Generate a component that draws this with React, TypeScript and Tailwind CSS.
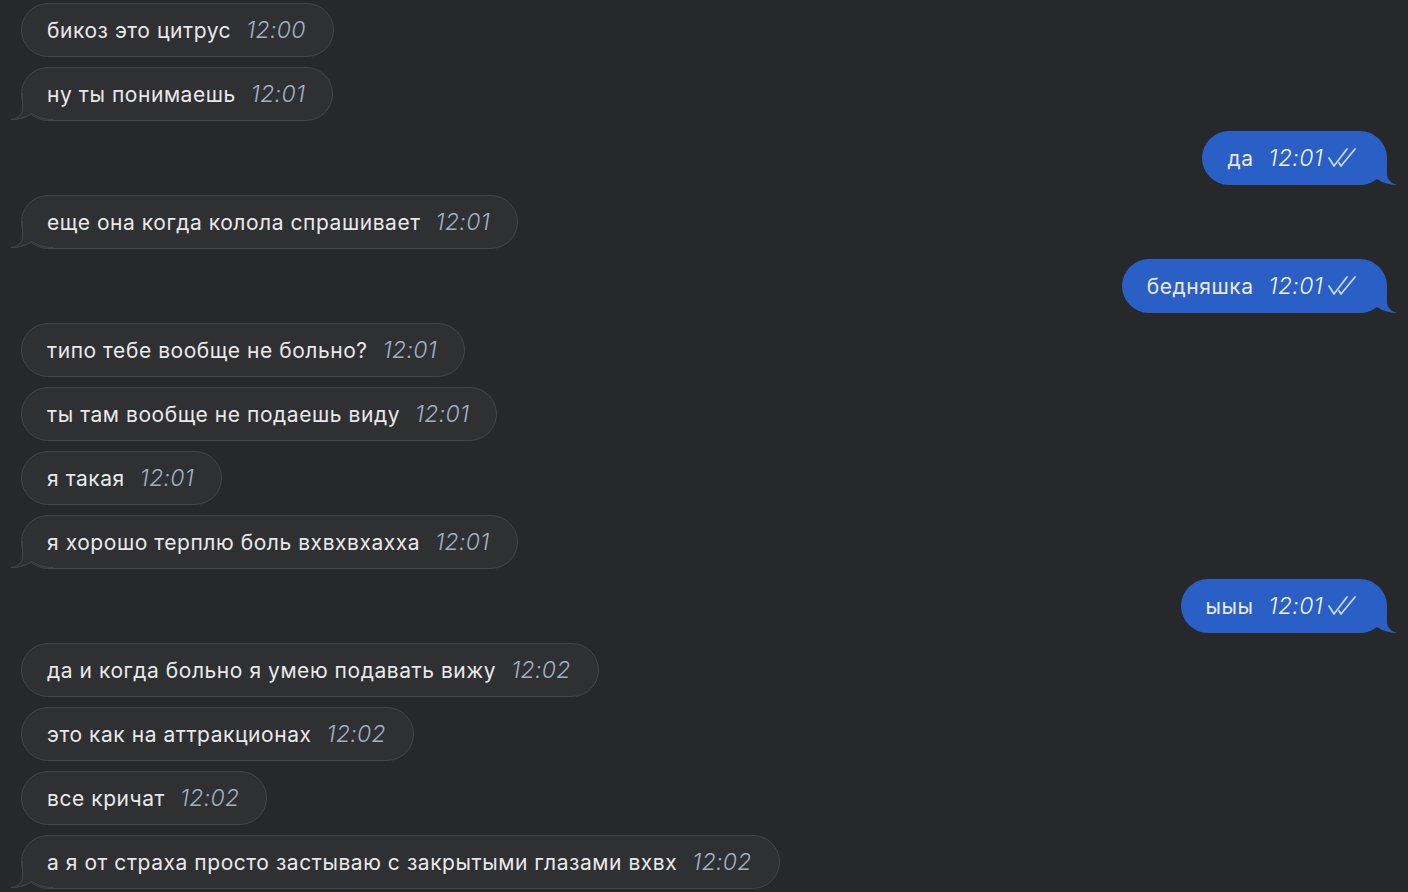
import React from 'react';

type Message = {
  text: string,
  time: string,
  out?: boolean,
  tail?: boolean,
};

const MESSAGES: Message[] = [
  { text: 'бикоз это цитрус', time: '12:00' },
  { text: 'ну ты понимаешь', time: '12:01', tail: true },
  { text: 'да', time: '12:01', out: true, tail: true },
  { text: 'еще она когда колола спрашивает', time: '12:01', tail: true },
  { text: 'бедняшка', time: '12:01', out: true, tail: true },
  { text: 'типо тебе вообще не больно?', time: '12:01' },
  { text: 'ты там вообще не подаешь виду', time: '12:01' },
  { text: 'я такая', time: '12:01' },
  { text: 'я хорошо терплю боль вхвхвхахха', time: '12:01', tail: true },
  { text: 'ыыы', time: '12:01', out: true, tail: true },
  { text: 'да и когда больно я умею подавать вижу', time: '12:02' },
  { text: 'это как на аттракционах', time: '12:02' },
  { text: 'все кричат', time: '12:02' },
  { text: 'а я от страха просто застываю с закрытыми глазами вхвх', time: '12:02', tail: true },
];

const TAIL_PATH = 'M11,0 L11,16 C11,22 6,26 0,27 C8,27 15,25 21,21 C27,25 33,27 42,27 L42,0 Z';
const TAIL_EDGE = 'M11.5,0 L11.5,16 C11.5,22 6,26 0,26.5 C8,26.5 15,24.5 21,20.5 C27,24.5 33,26.5 42,26.5';

function Tail({ out }: { out?: boolean }) {
  if (out) {
    return (
      <svg
        className="absolute bottom-0 right-[-11px] -scale-x-100"
        width="42"
        height="27"
        viewBox="0 0 42 27"
      >
        <path d={TAIL_PATH} fill="#2a5fc6" />
      </svg>
    );
  }
  return (
    <svg className="absolute bottom-0 left-[-11px]" width="42" height="27" viewBox="0 0 42 27">
      <path d={TAIL_PATH} fill="#2f3031" />
      <path d={TAIL_EDGE} fill="none" stroke="#434548" strokeWidth="1" />
    </svg>
  );
}

function DoubleCheck() {
  return (
    <svg width="31" height="21" viewBox="0 0 31 21" className="ml-[4px] mt-[-2px]">
      <path d="M2,11 L7,19 L20,2" fill="none" stroke="#c9d6ef" strokeWidth="1.8" strokeLinecap="round" strokeLinejoin="round" />
      <path d="M12,16 L14,19 L28,2" fill="none" stroke="#c9d6ef" strokeWidth="1.8" strokeLinecap="round" strokeLinejoin="round" />
    </svg>
  );
}

function Bubble({ msg }: { msg: Message }) {
  const base = 'relative flex items-center h-[54px] rounded-[27px] pl-[25px]';
  const cls = msg.out
    ? base + ' self-end mr-[21px] bg-[#2a5fc6] pr-[29px]'
    : base + ' self-start ml-[21px] bg-[#2f3031] border border-[#434548] pr-[27px]';

  return (
    <div className={cls}>
      {msg.tail && <Tail out={msg.out} />}
      <span className="relative text-[21px] tracking-[0.55px] text-[#e9e9ea] leading-none">
        {msg.text}
      </span>
      <span
        className={
          'relative ml-[15px] text-[23px] tracking-[0.3px] italic font-light leading-none ' +
          (msg.out ? 'text-[#f2f5fb]' : 'text-[#a2afc3]')
        }
      >
        {msg.time}
      </span>
      {msg.out && <DoubleCheck />}
    </div>
  );
}

export default function App() {
  return (
    <main
      className="w-[1408px] h-[892px] overflow-hidden bg-[#262829]"
      style={{ fontFamily: 'Inter, "Noto Sans", sans-serif' }}
    >
      <div className="flex flex-col gap-[10px] pt-[3px]">
        {MESSAGES.map((msg, i) => (
          <Bubble key={i} msg={msg} />
        ))}
      </div>
    </main>
  );
}
